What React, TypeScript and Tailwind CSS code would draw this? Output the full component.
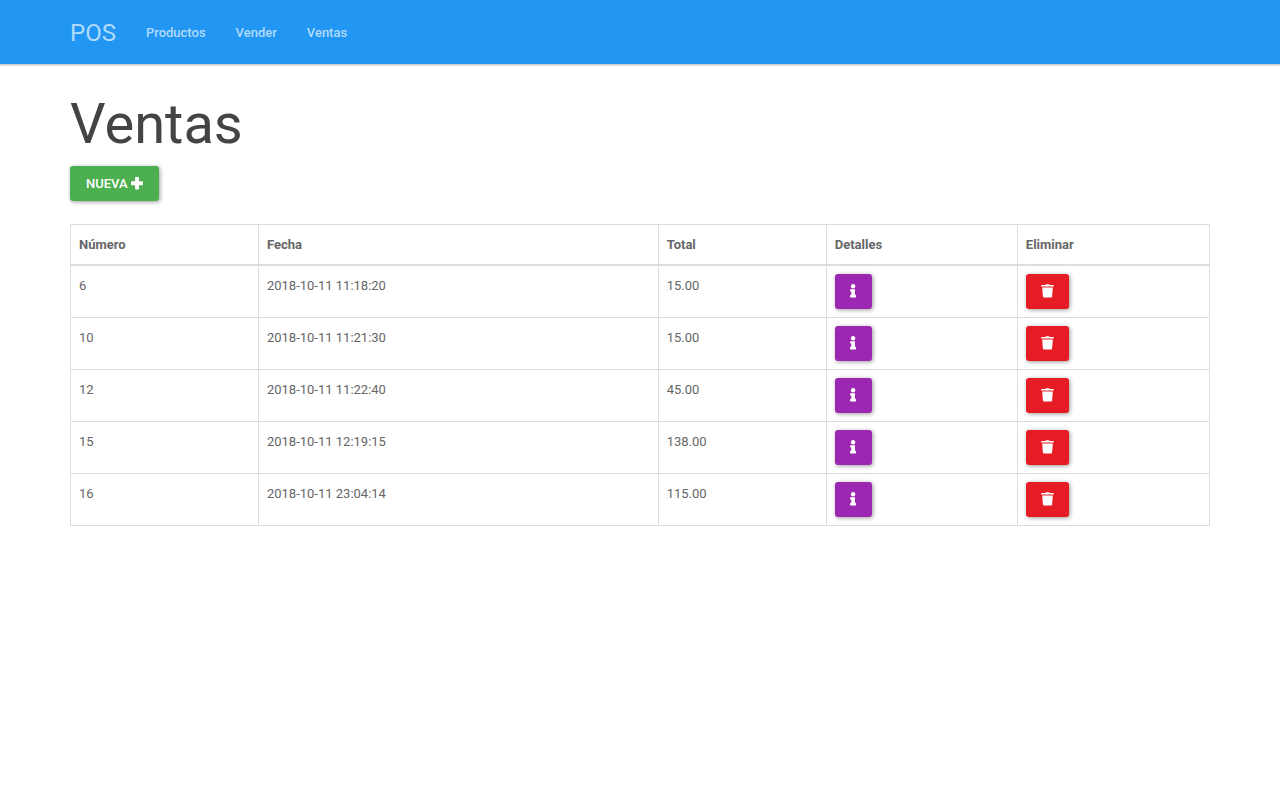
import React from "react";

const links = ["Productos", "Vender", "Ventas"];

const sales = [
  { id: 6, date: "2018-10-11 11:18:20", total: "15.00" },
  { id: 10, date: "2018-10-11 11:21:30", total: "15.00" },
  { id: 12, date: "2018-10-11 11:22:40", total: "45.00" },
  { id: 15, date: "2018-10-11 12:19:15", total: "138.00" },
  { id: 16, date: "2018-10-11 23:04:14", total: "115.00" },
];

function PlusIcon() {
  return (
    <svg viewBox="0 0 12 13" className="h-[13px] w-3 shrink-0 fill-current" aria-hidden="true">
      <path d="M4.6 0h2.800q.6 0 .6.6V4.200h3.400q.6 0 .6.6v2.800q0 .6-.6.6H8v3.600q0 .6-.6.6H4.600q-.6 0-.6-.6V8.200H.6Q0 8.200 0 7.600V4.800q0-.6.6-.6H4V.6q0-.6.6-.6z" />
    </svg>
  );
}

function InfoIcon() {
  return (
    <svg viewBox="0 0 6 14" className="h-[14px] w-[6px] shrink-0 fill-current" aria-hidden="true">
      <circle cx="3.100" cy="2.200" r="2.200" />
      <path d="M.6 5.200h3.900q.5 0 .5.500v5.100h.4q.6 0 .6.600v1.600q0 .5-.6.5H.6q-.5 0-.5-.5v-1.600q0-.6.500-.6h.700V7.600H.6q-.5 0-.5-.5V5.700q0-.5.500-.5z" />
    </svg>
  );
}

function TrashIcon() {
  return (
    <svg viewBox="0 0 13 14" className="h-[14px] w-[13px] shrink-0 fill-current" aria-hidden="true">
      <path d="M4.300.9 4.800.3h3.400l.5.6h3.600q.5 0 .5.500v1.100H.2V1.400Q.2.900.7.900zM1.200 3.400h10.600l-.7 9q-.1 1-1.100 1H3q-1 0-1.100-1z" />
    </svg>
  );
}

const th = "border border-b-2 border-[#dddddd] px-2 pt-2 pb-[7px] text-left font-bold";
const td = "border border-[#dddddd] p-2 align-top";
const btn =
  "h-[35px] cursor-pointer items-center justify-center rounded-[3px] text-white shadow-[1px_1px_4px_rgba(0,0,0,0.4)]";
const iconBtn = `${btn} flex pb-px`;

export default function App() {
  return (
    <div className="min-h-screen bg-white font-[Roboto,sans-serif] text-[13px] leading-6 text-[#666666]">
      <nav className="bg-[#2196f3] shadow-[0_1px_2px_rgba(0,0,0,0.3)]">
        <div className="mx-auto flex h-16 max-w-[1170px] items-center px-[15px] pt-[2px] text-[#b2dbfb]">
          <a href="#" className="mr-[15px] text-2xl">
            POS
          </a>
          {links.map((l) => (
            <a key={l} href="#" className="px-[15px] font-medium">
              {l}
            </a>
          ))}
        </div>
      </nav>
      <main className="mx-auto max-w-[1170px] px-[15px] pt-[29px]">
        <h1 className="text-[56px] leading-[62px] text-[#444444]">Ventas</h1>
        <a href="#" className={`${btn} mt-[11px] inline-flex gap-[3px] bg-[#4caf50] px-4 font-medium uppercase`}>
          Nueva <PlusIcon />
        </a>
        <table className="mt-[23px] w-full table-fixed border-collapse">
          <colgroup>
            <col className="w-[16.5%]" />
            <col className="w-[35.1%]" />
            <col className="w-[14.75%]" />
            <col className="w-[16.78%]" />
            <col />
          </colgroup>
          <thead>
            <tr>
              <th className={th}>Número</th>
              <th className={th}>Fecha</th>
              <th className={th}>Total</th>
              <th className={th}>Detalles</th>
              <th className={th}>Eliminar</th>
            </tr>
          </thead>
          <tbody>
            {sales.map((s) => (
              <tr key={s.id}>
                <td className={td}>{s.id}</td>
                <td className={td}>{s.date}</td>
                <td className={td}>{s.total}</td>
                <td className={td}>
                  <a href="#" aria-label="Detalles" className={`${iconBtn} w-[37px] bg-[#9c27b0]`}>
                    <InfoIcon />
                  </a>
                </td>
                <td className={td}>
                  <button type="button" aria-label="Eliminar" className={`${iconBtn} w-[43px] bg-[#e51c23]`}>
                    <TrashIcon />
                  </button>
                </td>
              </tr>
            ))}
          </tbody>
        </table>
      </main>
    </div>
  );
}
